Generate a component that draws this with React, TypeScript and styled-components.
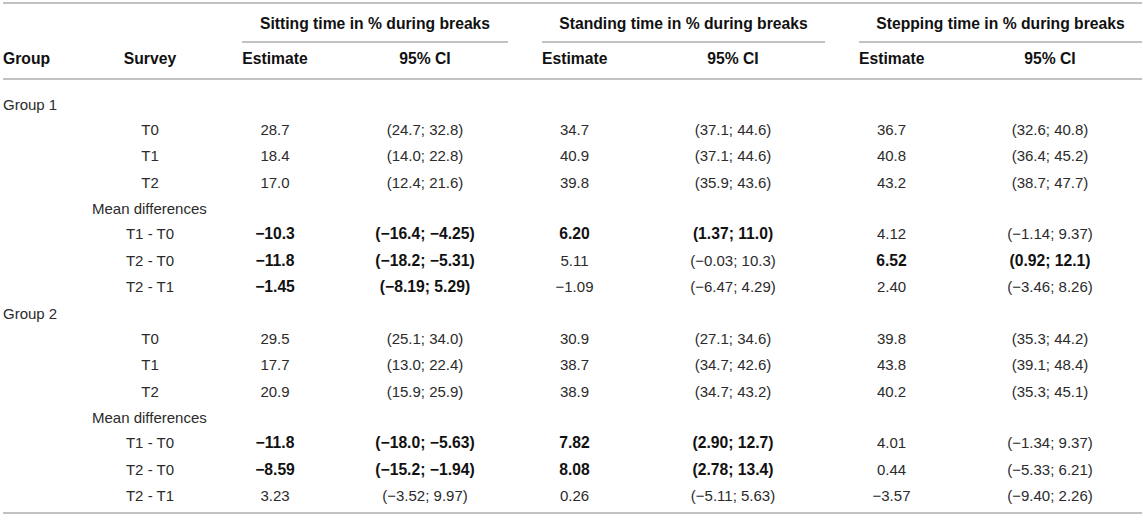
import React from "react";
import styled, { createGlobalStyle } from "styled-components";

const GlobalStyle = createGlobalStyle`
    html, body {
        margin: 0;
        padding: 0;
        background: #ffffff;
    }
    body {
        font-family: "Liberation Sans", Arial, Helvetica, sans-serif;
        color: #2b2b2b;
    }
`;

type Row = string[];

// "*" marks a bold (significant) value
const group1: Row[] = [
    ["T0", "28.7", "(24.7; 32.8)", "34.7", "(37.1; 44.6)", "36.7", "(32.6; 40.8)"],
    ["T1", "18.4", "(14.0; 22.8)", "40.9", "(37.1; 44.6)", "40.8", "(36.4; 45.2)"],
    ["T2", "17.0", "(12.4; 21.6)", "39.8", "(35.9; 43.6)", "43.2", "(38.7; 47.7)"],
];

const diffs1: Row[] = [
    ["T1 - T0", "*−10.3", "*(−16.4; −4.25)", "*6.20", "*(1.37; 11.0)", "4.12", "(−1.14; 9.37)"],
    ["T2 - T0", "*−11.8", "*(−18.2; −5.31)", "5.11", "(−0.03; 10.3)", "*6.52", "*(0.92; 12.1)"],
    ["T2 - T1", "*−1.45", "*(−8.19; 5.29)", "−1.09", "(−6.47; 4.29)", "2.40", "(−3.46; 8.26)"],
];

const group2: Row[] = [
    ["T0", "29.5", "(25.1; 34.0)", "30.9", "(27.1; 34.6)", "39.8", "(35.3; 44.2)"],
    ["T1", "17.7", "(13.0; 22.4)", "38.7", "(34.7; 42.6)", "43.8", "(39.1; 48.4)"],
    ["T2", "20.9", "(15.9; 25.9)", "38.9", "(34.7; 43.2)", "40.2", "(35.3; 45.1)"],
];

const diffs2: Row[] = [
    ["T1 - T0", "*−11.8", "*(−18.0; −5.63)", "*7.82", "*(2.90; 12.7)", "4.01", "(−1.34; 9.37)"],
    ["T2 - T0", "*−8.59", "*(−15.2; −1.94)", "*8.08", "*(2.78; 13.4)", "0.44", "(−5.33; 6.21)"],
    ["T2 - T1", "3.23", "(−3.52; 9.97)", "0.26", "(−5.11; 5.63)", "−3.57", "(−9.40; 2.26)"],
];

const measures = [
    "Sitting time in % during breaks",
    "Standing time in % during breaks",
    "Stepping time in % during breaks",
];

const DataRows: React.FC<{ rows: Row[] }> = ({ rows }) => (
    <>
        {rows.map((row) => (
            <React.Fragment key={row[0]}>
                <Cell />
                {row.map((value, i) => {
                    const bold = value.startsWith("*");
                    return (
                        <Cell key={i} $bold={bold}>
                            {bold ? value.slice(1) : value}
                        </Cell>
                    );
                })}
            </React.Fragment>
        ))}
    </>
);

const Block: React.FC<{ title: string; rows: Row[]; diffs: Row[] }> = ({
    title,
    rows,
    diffs,
}) => (
    <>
        <GroupLabel>{title}</GroupLabel>
        <DataRows rows={rows} />
        <SubLabel>Mean differences</SubLabel>
        <DataRows rows={diffs} />
    </>
);

const App: React.FC = () => {
    return (
        <>
            <GlobalStyle />
            <_Page>
                <_Table>
                    <Rule />
                    <HeadCorner>Group</HeadCorner>
                    <HeadSurvey>Survey</HeadSurvey>
                    {measures.map((m) => (
                        <Spanner key={m}>{m}</Spanner>
                    ))}
                    {measures.map((m) => (
                        <React.Fragment key={m + "sub"}>
                            <SubHead>Estimate</SubHead>
                            <SubHead>95% CI</SubHead>
                        </React.Fragment>
                    ))}
                    <Rule />
                    <BodyGap />
                    <Block title="Group 1" rows={group1} diffs={diffs1} />
                    <Block title="Group 2" rows={group2} diffs={diffs2} />
                    <BodyGap $small />
                    <Rule />
                </_Table>
            </_Page>
        </>
    );
};

export default App;

const _Page = styled.div`
    width: 1143px;
    height: 524px;
    padding: 2px 3px 0 3px;
    box-sizing: border-box;
    overflow: hidden;
`;

const _Table = styled.div`
    display: grid;
    grid-template-columns: 55px 116px 66px 166px 65px 184px 65px 184px;
    column-gap: 34px;
    font-size: 15px;
    line-height: 18px;
`;

const Rule = styled.div`
    grid-column: 1 / -1;
    height: 2px;
    background: #c2c2c2;
`;

const HeadCorner = styled.div`
    grid-column: 1;
    grid-row: 2 / span 2;
    align-self: end;
    padding-bottom: 10px;
    font-weight: 700;
    font-size: 15.7px;
    color: #111;
    white-space: nowrap;
`;

const HeadSurvey = styled(HeadCorner)`
    grid-column: 2;
    text-align: center;
`;

const Spanner = styled.div`
    grid-column: span 2;
    grid-row: 2;
    text-align: center;
    font-weight: 700;
    font-size: 15.7px;
    color: #111;
    padding: 11px 0 8px;
    border-bottom: 2px solid #c2c2c2;
    white-space: nowrap;
`;

const SubHead = styled.div`
    grid-row: 3;
    text-align: center;
    font-weight: 700;
    font-size: 15.7px;
    color: #111;
    padding: 7px 0 10px;
    white-space: nowrap;
`;

const BodyGap = styled.div<{ $small?: boolean }>`
    grid-column: 1 / -1;
    height: ${(p) => (p.$small ? "2.5px" : "11.5px")};
`;

const GroupLabel = styled.div`
    grid-column: 1 / -1;
    height: 25px;
    line-height: 25px;
    white-space: nowrap;
`;

const SubLabel = styled(GroupLabel)`
    grid-column: 2 / -1;
`;

const Cell = styled.div<{ $bold?: boolean }>`
    height: 26.5px;
    line-height: 26.5px;
    text-align: center;
    white-space: nowrap;
    font-weight: ${(p) => (p.$bold ? 700 : 400)};
    font-size: ${(p) => (p.$bold ? "15.7px" : "15px")};
    color: ${(p) => (p.$bold ? "#111" : "#2b2b2b")};
`;
